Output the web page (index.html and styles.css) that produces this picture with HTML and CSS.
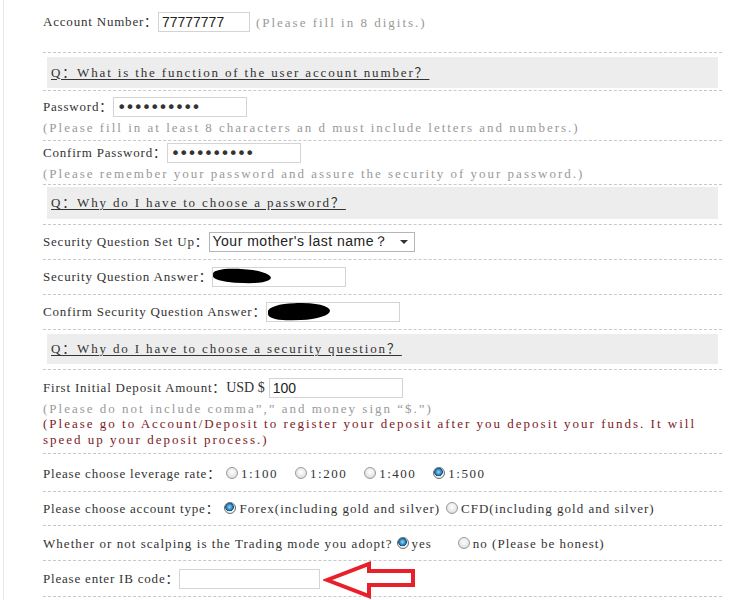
FILE: index.html
```html
<!DOCTYPE html>
<html>
<head>
    <meta charset="utf-8">
    <title>Open Account</title>
    <link rel="stylesheet" href="styles.css">
</head>
<body>
    <div class="page">
        <form class="reg-form">
            <div class="row row-account">
                <span class="label">Account Number：</span>
                <input class="field field-account" type="text" value="77777777">
                <span class="hint hint-inline">(Please fill in 8 digits.)</span>
            </div>
            <div class="row row-faq faq-1">
                <div class="faq"><a href="#">Q：What is the function of the user account number？</a></div>
            </div>

            <div class="row row-password">
                <div class="line">
                    <span class="label">Password：</span>
                    <input class="field" type="password" value="1234567890">
                </div>
                <div class="hint">(Please fill in at least 8 characters an d must include letters and numbers.)</div>
            </div>
            <div class="row row-confirm">
                <div class="line">
                    <span class="label">Confirm Password：</span>
                    <input class="field" type="password" value="1234567890">
                </div>
                <div class="hint">(Please remember your password and assure the security of your password.)</div>
            </div>
            <div class="row row-faq faq-2">
                <div class="faq"><a href="#">Q：Why do I have to choose a password？</a></div>
            </div>

            <div class="row row-plain">
                <span class="label">Security Question Set Up：</span>
                <div class="select">
                    <span>Your mother's last name？</span>
                    <span class="caret"></span>
                </div>
            </div>
            <div class="row row-plain">
                <span class="label">Security Question Answer：</span>
                <span class="masked">
                    <input class="field" type="text">
                    <span class="blot blot-1"></span>
                </span>
            </div>
            <div class="row row-plain">
                <span class="label">Confirm Security Question Answer：</span>
                <span class="masked">
                    <input class="field" type="text">
                    <span class="blot blot-2"></span>
                </span>
            </div>
            <div class="row row-faq faq-3">
                <div class="faq"><a href="#">Q：Why do I have to choose a security question？</a></div>
            </div>

            <div class="row row-deposit">
                <div class="line">
                    <span class="label">First Initial Deposit Amount：<span class="usd">USD $</span></span>
                    <input class="field" type="text" value="100">
                </div>
                <div class="hint">(Please do not include comma”,” and money sign “$.”)</div>
                <div class="notice">(Please go to Account/Deposit to register your deposit after you deposit your funds. It will speed up your deposit process.)</div>
            </div>

            <div class="row row-leverage">
                <span class="label">Please choose leverage rate：</span>
                <label class="choice"><input type="radio" name="lev">1:100</label>
                <label class="choice"><input type="radio" name="lev">1:200</label>
                <label class="choice"><input type="radio" name="lev">1:400</label>
                <label class="choice"><input type="radio" name="lev" checked>1:500</label>
            </div>
            <div class="row row-type">
                <span class="label">Please choose account type：</span>
                <label class="choice choice-tight"><input type="radio" name="type" checked>Forex(including gold and silver)</label>
                <label class="choice choice-cfd"><input type="radio" name="type">CFD(including gold and silver)</label>
            </div>
            <div class="row row-scalp">
                <span class="label label-wide">Whether or not scalping is the Trading mode you adopt?</span>
                <label class="choice choice-yes"><input type="radio" name="scalp" checked>yes</label>
                <label class="choice"><input type="radio" name="scalp">no (Please be honest)</label>
            </div>
            <div class="row row-ib">
                <span class="label">Please enter IB code：</span>
                <input class="field field-ib" type="text">
                <svg class="arrow" width="96" height="40" viewBox="0 0 96 40">
                    <polygon points="4,19 46,3 46,10 90,10 90,24 46,24 46,35" fill="#fff" stroke="#e8202a" stroke-width="4" stroke-linejoin="miter"/>
                </svg>
            </div>
        </form>
    </div>
</body>
</html>
```

FILE: styles.css
```css
* {
    box-sizing: border-box;
}

body {
    margin: 0;
    background: #fff;
    font-family: "Liberation Serif", "Noto Sans CJK SC", serif;
    font-size: 13px;
    color: #333;
}

.page {
    margin-left: 3px;
    border-left: 1px solid #e8e8e8;
    min-height: 600px;
    padding: 0 10px 0 39px;
}

.reg-form {
    width: 679px;
}

/* every block ends with a dashed rule */
.row {
    border-bottom: 1px dashed #c8c8c8;
    display: flex;
    align-items: center;
}

.row-account { padding: 12px 0 20px; height: 53px; }
.row-plain { padding: 0; height: 35px; }
.row-leverage { height: 38px; padding-top: 2px; }
.row-type { height: 34px; }
.row-scalp { height: 35px; padding-top: 2px; }
.row-ib { height: 36px; }

.row-password, .row-confirm, .row-deposit {
    flex-direction: column;
    align-items: flex-start;
}
.row-password { padding-top: 6px; height: 50px; }
.row-confirm { padding-top: 2px; height: 44px; }
.row-deposit { padding-top: 8px; height: 84px; }

.line {
    display: flex;
    align-items: center;
}

.label {
    letter-spacing: 0.8px;
    line-height: 14px;
    white-space: nowrap;
}

.label-wide {
    letter-spacing: 1.05px;
}

.usd {
    letter-spacing: 0;
    margin-right: 4px;
    font-size: 14px;
}

.field {
    width: 134px;
    height: 20px;
    border: 1px solid #d4d4d4;
    padding: 0 3px;
    font-family: "Liberation Sans", sans-serif;
    font-size: 14px;
    color: #222;
    background: #fff;
}

input[type="password"].field {
    font-family: "DejaVu Sans", sans-serif;
    font-size: 16px;
    letter-spacing: -1.2px;
    color: #333;
}

.field-account { width: 92px; margin-right: 6px; }
.field-ib { width: 141px; }

.hint {
    color: #999;
    font-size: 13px;
    letter-spacing: 2px;
    line-height: 19px;
    margin-top: 1px;
}

.hint-inline {
    margin-top: 0;
}

.notice {
    color: #7b1a1f;
    letter-spacing: 2px;
    line-height: 16px;
    margin-top: -2px;
}

/* grey FAQ strips */
.row-faq {
    display: block;
    padding: 0 4px;
}
.faq-1 { padding-top: 4px; height: 38px; }
.faq-2 { padding-top: 2px; height: 40px; }
.faq-3 { padding-top: 4px; height: 40px; }

.faq {
    background: #ededed;
    height: 31px;
    padding: 0 4px;
    display: flex;
    align-items: center;
}
.faq-2 .faq { height: 32px; }
.faq-3 .faq { height: 30px; }

.faq a {
    color: #333;
    letter-spacing: 1.85px;
    line-height: 14px;
    text-decoration: underline;
    text-underline-offset: 2px;
}

.select {
    width: 206px;
    height: 20px;
    border: 1px solid #b5b5b5;
    display: flex;
    align-items: center;
    justify-content: space-between;
    padding: 0 6px 0 3px;
    font-family: "Liberation Sans", sans-serif;
    font-size: 14px;
    letter-spacing: 0.5px;
    color: #222;
}

.caret {
    width: 0;
    height: 0;
    border-left: 4px solid transparent;
    border-right: 4px solid transparent;
    border-top: 4px solid #333;
}

.masked {
    position: relative;
    display: inline-block;
    height: 20px;
}

.blot {
    position: absolute;
    background: #000;
    border-radius: 45% 55% 50% 40%;
}
.blot-1 { left: 1px; top: 2px; width: 58px; height: 14px; transform: rotate(3deg); }
.blot-2 { left: 2px; top: 1px; width: 62px; height: 17px; transform: rotate(-2deg); }

.choice {
    display: inline-flex;
    align-items: center;
    letter-spacing: 1.5px;
    margin-right: 17px;
    white-space: nowrap;
}
.row-type .choice, .row-scalp .choice { letter-spacing: 1px; }
.choice-tight { margin-right: 6px; }
.choice-cfd input { margin-right: 8px; }
.choice-yes { margin-right: 26px; }

.choice input {
    appearance: none;
    width: 12px;
    height: 12px;
    margin: 0 3px 2px 0;
    border: 1px solid #9a9a9a;
    border-radius: 50%;
    background: radial-gradient(circle at 50% 40%, #fff 0%, #e6e6e6 60%, #c8c8c8 100%);
}

.row-leverage .label, .row-type .label { margin-right: 5px; }
.row-scalp .label { margin-right: 4px; }

.choice input:checked {
    background:
        radial-gradient(circle at 45% 40%, #9fd6f5 0%, #2a85c2 35%, #0d4f80 50%, transparent 56%),
        radial-gradient(circle, #fff 0%, #e6e6e6 100%);
    border-color: #6d6d6d;
}

.arrow {
    margin-left: 3px;
    margin-top: 4px;
}
```
